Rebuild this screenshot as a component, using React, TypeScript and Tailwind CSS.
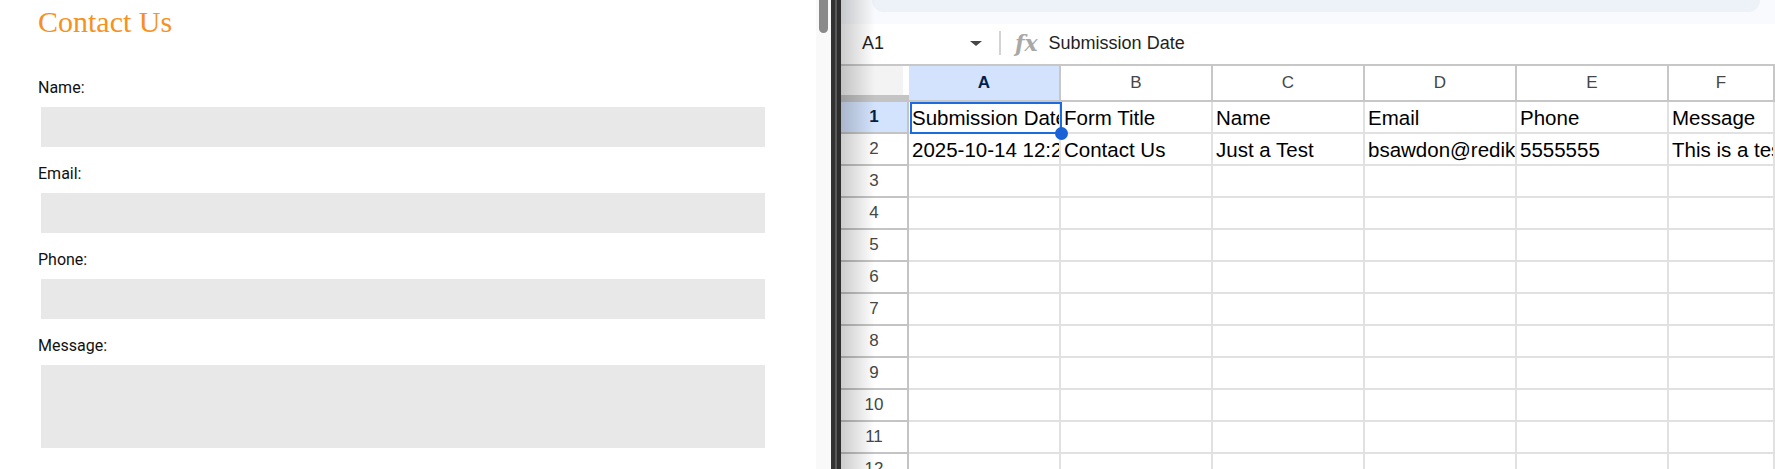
const FIELDS = [
  { label: "Name:", h: "h-[40px]" },
  { label: "Email:", h: "h-[40px]" },
  { label: "Phone:", h: "h-[40px]" },
  { label: "Message:", h: "h-[83px]" },
];

const COLS = [
  { key: "A", w: "w-[152px]" },
  { key: "B", w: "w-[152px]" },
  { key: "C", w: "w-[152px]" },
  { key: "D", w: "w-[152px]" },
  { key: "E", w: "w-[152px]" },
  { key: "F", w: "w-[106px]" },
];

const DATA: string[][] = [
  ["Submission Date", "Form Title", "Name", "Email", "Phone", "Message"],
  ["2025-10-14 12:29:41", "Contact Us", "Just a Test", "bsawdon@redikerdesign.com", "5555555", "This is a test message."],
];

const ROWS = Array.from({ length: 12 }, (_, i) => i + 1);

function ContactForm() {
  return (
    <div className="w-[816px] shrink-0 bg-white pl-[38px] pt-[7px]">
      <h1 className="text-[30px] leading-[30px] text-[#f7911e]" style={{ fontFamily: '"Liberation Serif", serif' }}>
        Contact Us
      </h1>
      <div className="mt-[41px] flex flex-col gap-[17px]" style={{ fontFamily: "Roboto, sans-serif" }}>
        {FIELDS.map((f) => (
          <div key={f.label} className="flex flex-col gap-[9px]">
            <label className="text-[16px] leading-[20px] text-[#111]">{f.label}</label>
            <div className={`ml-[3px] w-[724px] bg-[#e8e8e8] ${f.h}`} />
          </div>
        ))}
      </div>
    </div>
  );
}

function FormulaBar() {
  return (
    <div className="shrink-0">
      <div className="h-[24px] bg-[#f8fafd] pl-[31px] pr-[15px]">
        <div className="h-[12px] rounded-b-[14px] bg-[#edf1f8]" />
      </div>
      <div className="flex h-[42px] items-center border-b-2 border-[#c7c7c7] bg-white pb-[2px]">
        <div className="flex w-[141px] items-center justify-between pl-[21px]">
          <span className="text-[18px] text-[#1f1f1f]">A1</span>
          <span className="h-0 w-0 border-x-[6px] border-t-[5px] border-x-transparent border-t-[#444746]" />
        </div>
        <div className="ml-[17px] h-[24px] w-[2px] bg-[#d3d3d3]" />
        <span
          className="ml-[14px] text-[22px] font-bold italic leading-none text-[#a8a8a8]"
          style={{ fontFamily: '"DejaVu Serif", serif' }}
        >
          fx
        </span>
        <span className="ml-[11px] text-[18px] text-[#1f1f1f]">Submission Date</span>
      </div>
    </div>
  );
}

function Grid() {
  return (
    <div className="relative flex flex-col">
      <div className="flex h-[36px]">
        <div className="flex w-[68px] shrink-0 flex-col">
          <div className="flex h-[29px]">
            <div className="w-[62px] bg-[#f3f3f3]" />
            <div className="flex-1 bg-white" />
          </div>
          <div className="h-[7px] bg-[#c4c4c4]" />
        </div>
        {COLS.map((c, i) => (
          <div
            key={c.key}
            className={`${c.w} flex shrink-0 items-center justify-center border-b-2 border-r-2 border-[#c7c7c7] text-[17px] ${
              i === 0 ? "bg-[#d3e3fd] font-bold text-[#041e49]" : "bg-white text-[#444746]"
            }`}
          >
            {c.key}
          </div>
        ))}
      </div>
      {ROWS.map((r) => (
        <div key={r} className="flex h-[32px] shrink-0">
          <div
            className={`flex w-[68px] shrink-0 items-center justify-center border-b-2 border-r-2 border-[#c4c4c4] text-[17px] ${
              r === 1 ? "bg-[#d3e3fd] font-bold text-[#041e49]" : "bg-white text-[#444746]"
            }`}
          >
            {r}
          </div>
          {COLS.map((c, i) => (
            <div
              key={c.key}
              className={`${c.w} flex shrink-0 items-center overflow-hidden whitespace-nowrap border-b-2 border-r-2 border-[#e1e1e1] pl-[3px] pt-[2px] text-[20.5px] text-black`}
            >
              {DATA[r - 1]?.[i] ?? ""}
            </div>
          ))}
        </div>
      ))}
      {/* selected cell A1 */}
      <div className="absolute left-[69px] top-[36px] h-[32px] w-[152px] border-2 border-[#1a6ce0]" />
      <div className="absolute left-[214px] top-[61px] h-[13px] w-[13px] rounded-full bg-[#1a62d6]" />
    </div>
  );
}

export default function App() {
  return (
    <div className="flex h-[469px] w-[1775px] overflow-hidden bg-white">
      <ContactForm />
      <div className="w-[15px] shrink-0 bg-[#f9f9f9]">
        <div className="ml-[3px] h-[33px] w-[9px] rounded-b-full bg-[#8a8a8a]" />
      </div>
      <div className="flex w-[10px] shrink-0">
        <div className="w-[4px] bg-[#333333]" />
        <div className="w-[2px] bg-[#595959]" />
        <div className="w-[4px] bg-[#2e2e2e]" />
      </div>
      <div
        className="relative flex w-[934px] shrink-0 flex-col overflow-hidden bg-white"
        style={{ fontFamily: '"Liberation Sans", Arial, sans-serif' }}
      >
        <FormulaBar />
        <Grid />
        <div className="pointer-events-none absolute inset-y-0 left-0 w-[34px] bg-gradient-to-r from-black/20 to-transparent" />
      </div>
    </div>
  );
}
